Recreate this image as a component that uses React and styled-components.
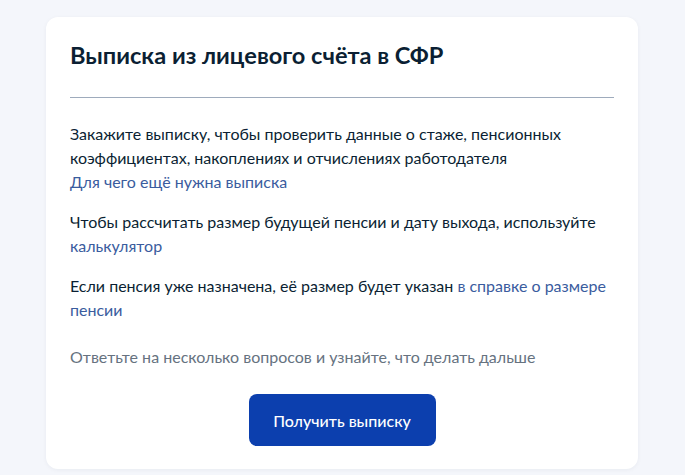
import React from 'react'
import styled, { createGlobalStyle } from 'styled-components'

const GlobalStyle = createGlobalStyle`
    html, body {
        margin: 0;
        padding: 0;
        background: #f4f6fb;
        font-family: Lato, "Noto Sans", sans-serif;
        -webkit-font-smoothing: antialiased;
    }
`

const Page = styled.div`
    width: 685px;
    height: 475px;
    padding: 17px 47px 0 46px;
    box-sizing: border-box;
    overflow: hidden;
`

const Card = styled.section`
    background: #ffffff;
    border-radius: 12px;
    padding: 24px 24px 23px;
    box-shadow: 0 1px 4px rgba(11, 31, 51, 0.05);
    display: flex;
    flex-direction: column;
`

const Title = styled.h1`
    margin: 0;
    font-size: 23.6px;
    line-height: 28px;
    font-weight: 700;
    color: #0b1f33;
`

const Divider = styled.hr`
    margin: 28px 0 24px;
    border: 0;
    border-top: 1px solid #9eabbc;
`

const Text = styled.p`
    margin: 0 0 ${(p) => p.$gap ?? 16}px;
    font-size: 16px;
    line-height: 24px;
    color: ${(p) => (p.$muted ? '#66727f' : '#0b1f33')};
`

const Link = styled.a`
    color: #3a5c9e;
    text-decoration: none;
`

const Button = styled.button`
    align-self: center;
    width: 187px;
    height: 52px;
    border: 0;
    border-radius: 8px;
    background: #0c3fae;
    color: #ffffff;
    font-family: Lato, "Noto Sans", sans-serif;
    font-size: 16px;
    font-weight: 500;
    cursor: pointer;
`

export default function App() {
    return (
        <Page>
            <GlobalStyle />
            <Card>
                <Title>Выписка из лицевого счёта в СФР</Title>
                <Divider />
                <Text>
                    Закажите выписку, чтобы проверить данные о стаже, пенсионных коэффициентах, накоплениях и отчислениях работодателя
                    <br />
                    <Link href="#">Для чего ещё нужна выписка</Link>
                </Text>
                <Text>
                    Чтобы рассчитать размер будущей пенсии и дату выхода, используйте{' '}
                    <Link href="#">калькулятор</Link>
                </Text>
                <Text $gap={23}>
                    Если пенсия уже назначена, её размер будет указан <Link href="#">в справке о размере пенсии</Link>
                </Text>
                <Text $muted $gap={25}>
                    Ответьте на несколько вопросов и узнайте, что делать дальше
                </Text>
                <Button>Получить выписку</Button>
            </Card>
        </Page>
    )
}
